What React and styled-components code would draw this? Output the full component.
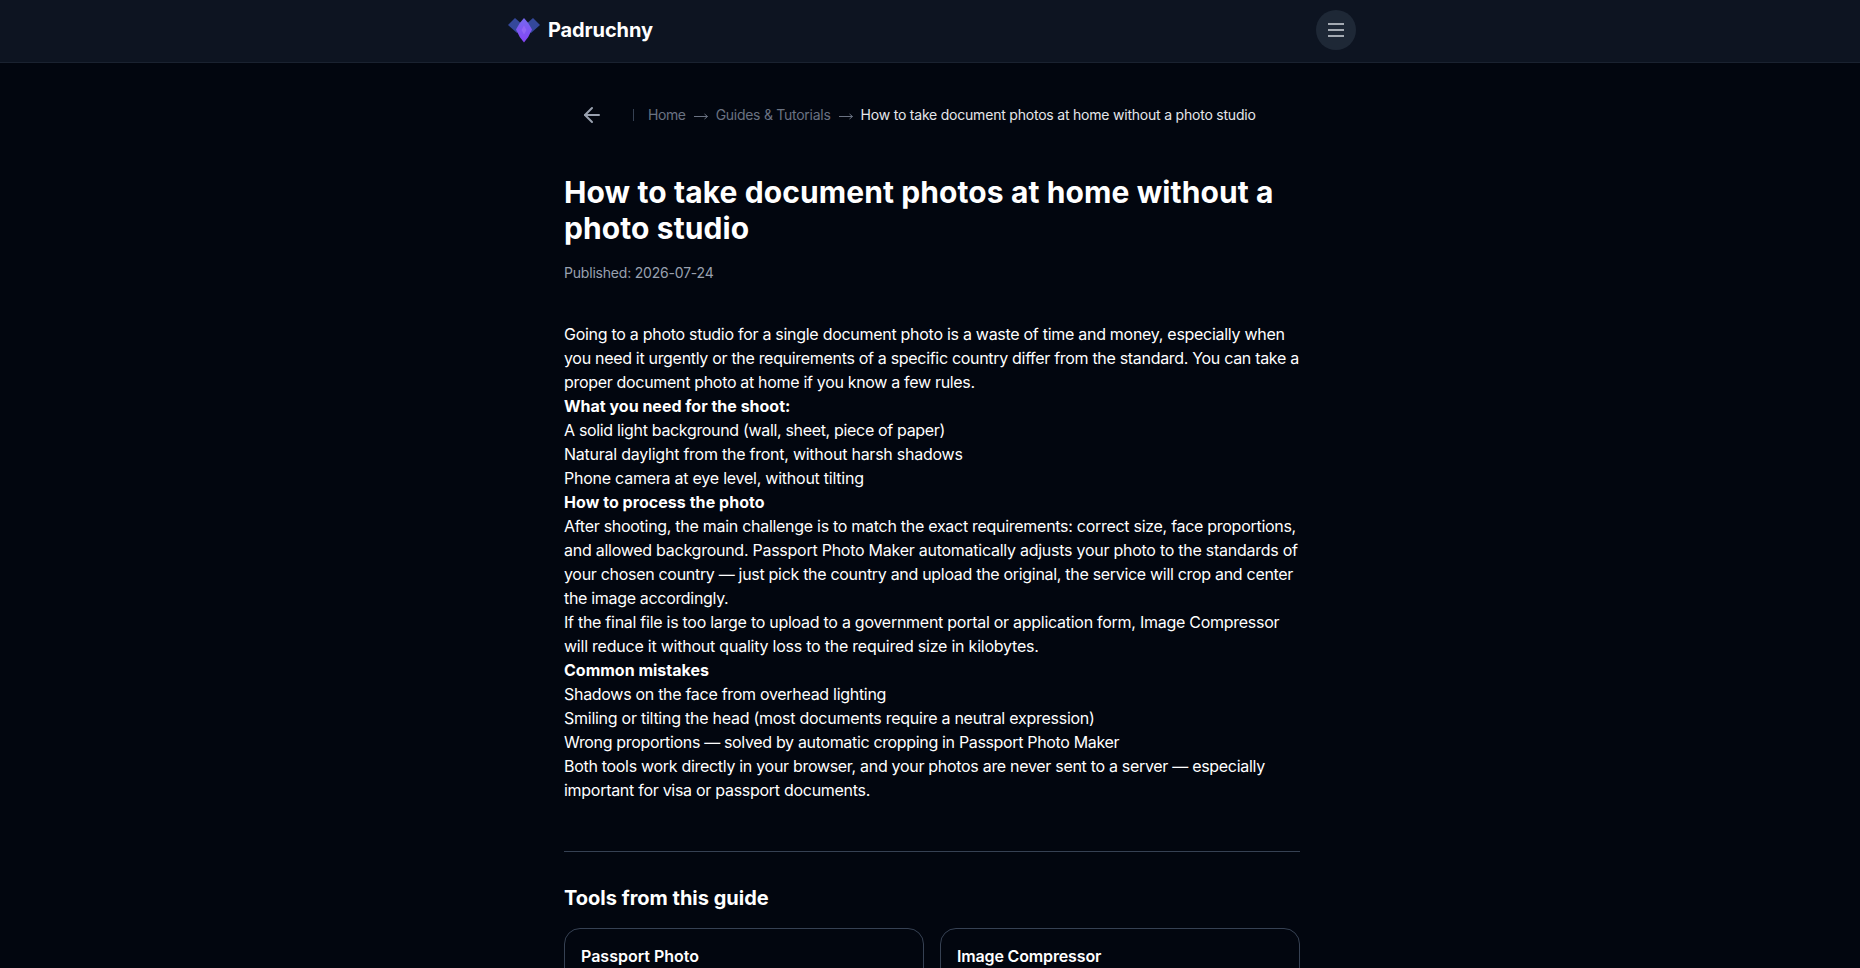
import React from "react";
import styled, { createGlobalStyle } from "styled-components";
import { ArrowLeft } from "lucide-react";

const GlobalStyle = createGlobalStyle`
  * {
    box-sizing: border-box;
  }

  body {
    margin: 0;
    height: 968px;
    overflow: hidden;
    background: #02060f;
    color: #fff;
    font-family: Inter, "Liberation Sans", sans-serif;
    font-size: 16px;
    line-height: 24px;
  }
`;

const Header = styled.header`
  height: 63px;
  padding-left: 4px;
  background: #0d1421;
  border-bottom: 1px solid #1a2230;
`;

const HeaderInner = styled.div`
  display: flex;
  align-items: center;
  justify-content: space-between;
  width: 848px;
  height: 60px;
  margin: 0 auto;
`;

const Brand = styled.a`
  display: flex;
  align-items: center;
  gap: 8px;
`;

const BrandName = styled.span`
  font-size: 20px;
  font-weight: 700;
  line-height: 28px;
  letter-spacing: -0.12px;
`;

const MenuButton = styled.button`
  display: flex;
  align-items: center;
  justify-content: center;
  width: 40px;
  height: 40px;
  padding: 0;
  border: 0;
  border-radius: 50%;
  background: #1e2836;
  color: #d1d5dc;
`;

const Page = styled.div`
  padding-left: 4px;
`;

const Main = styled.main`
  width: 736px;
  margin: 0 auto;
  padding-top: 32px;
`;

const Breadcrumbs = styled.nav`
  display: flex;
  align-items: center;
  height: 40px;
  font-size: 14px;
  line-height: 20px;
  color: #6a7282;
  white-space: nowrap;
`;

const BackButton = styled.button`
  display: flex;
  align-items: center;
  justify-content: center;
  width: 56px;
  height: 40px;
  padding: 0;
  border: 0;
  background: none;
  color: #99a1af;
`;

const Divider = styled.span`
  width: 1px;
  height: 12px;
  margin: 0 14px 0 13px;
  background: #364153;
`;

const Crumb = styled.span`
  color: ${props => (props.$current ? "#e5e7eb" : "#6a7282")};
  letter-spacing: ${props => props.$spacing};
`;

const ArrowIcon = styled.svg`
  width: 16px;
  height: 10px;
  margin: 2px 7px 0;
`;

const Title = styled.h1`
  margin: 39px 0 0;
  font-size: 30px;
  font-weight: 700;
  line-height: 36px;
  letter-spacing: 0.1px;
`;

const TitleLine = styled.span`
  display: block;
  white-space: nowrap;
`;

const Published = styled.p`
  margin: 17px 0 39px;
  font-size: 14px;
  line-height: 20px;
  color: #99a1af;
  letter-spacing: -0.2px;
`;

const Line = styled.div`
  font-weight: ${props => (props.$bold ? 700 : 400)};
  letter-spacing: ${props => props.$spacing || 0}px;
  white-space: nowrap;
`;

const Tools = styled.section`
  margin-top: 49px;
  padding-top: 32px;
  border-top: 1px solid #364153;
`;

const ToolsTitle = styled.h2`
  margin: 0 0 16px;
  font-size: 20px;
  font-weight: 700;
  line-height: 28px;
`;

const ToolGrid = styled.div`
  display: grid;
  grid-template-columns: 1fr 1fr;
  gap: 16px;
`;

const ToolCard = styled.a`
  height: 110px;
  padding: 15px 16px;
  border: 1px solid #364153;
  border-radius: 16px;
  font-weight: 600;
`;

const ToolName = styled.span`
  letter-spacing: ${props => props.$spacing || 0}px;
`;

const article = [
  { text: "Going to a photo studio for a single document photo is a waste of time and money, especially when", spacing: -0.283 },
  { text: "you need it urgently or the requirements of a specific country differ from the standard. You can take a", spacing: -0.311 },
  { text: "proper document photo at home if you know a few rules.", spacing: -0.318 },
  { text: "What you need for the shoot:", bold: true },
  { text: "A solid light background (wall, sheet, piece of paper)", spacing: -0.33 },
  { text: "Natural daylight from the front, without harsh shadows", spacing: -0.242 },
  { text: "Phone camera at eye level, without tilting", spacing: -0.24 },
  { text: "How to process the photo", bold: true, spacing: 0.05 },
  { text: "After shooting, the main challenge is to match the exact requirements: correct size, face proportions,", spacing: -0.285 },
  { text: "and allowed background. Passport Photo Maker automatically adjusts your photo to the standards of", spacing: -0.258 },
  { text: "your chosen country — just pick the country and upload the original, the service will crop and center", spacing: -0.305 },
  { text: "the image accordingly.", spacing: -0.32 },
  { text: "If the final file is too large to upload to a government portal or application form, Image Compressor", spacing: -0.268 },
  { text: "will reduce it without quality loss to the required size in kilobytes.", spacing: -0.229 },
  { text: "Common mistakes", bold: true },
  { text: "Shadows on the face from overhead lighting", spacing: -0.296 },
  { text: "Smiling or tilting the head (most documents require a neutral expression)", spacing: -0.258 },
  { text: "Wrong proportions — solved by automatic cropping in Passport Photo Maker", spacing: -0.338 },
  { text: "Both tools work directly in your browser, and your photos are never sent to a server — especially", spacing: -0.303 },
  { text: "important for visa or passport documents.", spacing: -0.283 },
];

function Logo() {
  return (
    <svg width="32" height="26" viewBox="0 0 32 26">
      <defs>
        <linearGradient id="gem" x1="0" y1="0" x2="0" y2="1">
          <stop offset="0" stopColor="#7669ee" />
          <stop offset="1" stopColor="#8544f5" />
        </linearGradient>
      </defs>
      <path d="M0 8 7 1 16 9 9 16Z" fill="#34489b" />
      <path d="M32 8 25 1 16 9 23 16Z" fill="#34489b" />
      <path d="M16 1Q21 6 24 12.500 21 20 16 25.500 11 20 8 12.500 11 6 16 1Z" fill="url(#gem)" />
      <path d="M16 8.500 18.500 13 16 17.500 13.500 13Z" fill="#9265f5" />
    </svg>
  );
}

function MenuIcon() {
  return (
    <svg width="24" height="24" viewBox="0 0 24 24" stroke="currentColor" strokeWidth="1.5">
      <path d="M4 6h16M4 12h16M4 18h16" />
    </svg>
  );
}

function CrumbArrow() {
  return (
    <ArrowIcon viewBox="0 0 16 10" fill="none" stroke="#6a7282">
      <path d="M1 5.5h13.5M11.5 3l3 2.500-3 2.500" />
    </ArrowIcon>
  );
}

function App() {
  return (
    <>
      <GlobalStyle />
      <Header>
        <HeaderInner>
          <Brand>
            <Logo />
            <BrandName>Padruchny</BrandName>
          </Brand>
          <MenuButton aria-label="Menu">
            <MenuIcon />
          </MenuButton>
        </HeaderInner>
      </Header>
      <Page>
        <Main>
          <Breadcrumbs>
            <BackButton aria-label="Back">
              <ArrowLeft size={24} strokeWidth={2} />
            </BackButton>
            <Divider />
            <Crumb $spacing="-0.4px">Home</Crumb>
            <CrumbArrow />
            <Crumb $spacing="-0.27px">Guides &amp; Tutorials</Crumb>
            <CrumbArrow />
            <Crumb $current $spacing="-0.21px">How to take document photos at home without a photo studio</Crumb>
          </Breadcrumbs>
          <Title>
            <TitleLine>How to take document photos at home without a</TitleLine>
            <TitleLine>photo studio</TitleLine>
          </Title>
          <Published>Published: 2026-07-24</Published>
          {article.map(line => (
            <Line key={line.text} $bold={line.bold} $spacing={line.spacing}>{line.text}</Line>
          ))}
          <Tools>
            <ToolsTitle>Tools from this guide</ToolsTitle>
            <ToolGrid>
              <ToolCard><ToolName>Passport Photo</ToolName></ToolCard>
              <ToolCard><ToolName $spacing={-0.15}>Image Compressor</ToolName></ToolCard>
            </ToolGrid>
          </Tools>
        </Main>
      </Page>
    </>
  );
}

export default App;
